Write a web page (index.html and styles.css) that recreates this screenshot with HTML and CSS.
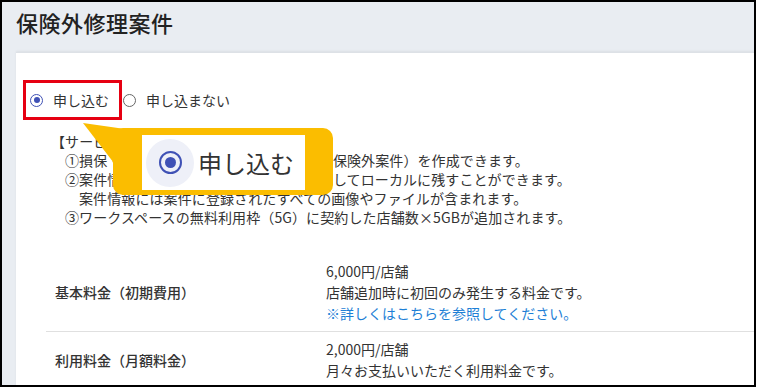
FILE: index.html
```html
<!DOCTYPE html>
<html lang="ja">
<head>
    <meta charset="UTF-8">
    <meta name="viewport" content="width=device-width, initial-scale=1.0">
    <title>保険外修理案件</title>
    <link rel="stylesheet" href="styles.css">
</head>
<body>
    <div class="frame">
        <h1 class="page-title">保険外修理案件</h1>

        <div class="card">
            <div class="radio-group">
                <label class="radio-item">
                    <span class="radio checked"></span>
                    <span>申し込む</span>
                </label>
                <label class="radio-item">
                    <span class="radio"></span>
                    <span>申し込まない</span>
                </label>
            </div>

            <div class="service">
                <p>【サービス内容】</p>
                <p class="item">①損保・共済会社を経由しない修理案件（保険外案件）を作成できます。</p>
                <p class="item">②案件情報を一括でまとめてダウンロードしてローカルに残すことができます。</p>
                <p class="item sub">案件情報には案件に登録されたすべての画像やファイルが含まれます。</p>
                <p class="item">③ワークスペースの無料利用枠（5G）に契約した店舗数×5GBが追加されます。</p>
            </div>

            <table class="fees">
                <tr>
                    <th>基本料金（初期費用）</th>
                    <td>
                        6,000円/店舗<br>
                        店舗追加時に初回のみ発生する料金です。<br>
                        <a href="#" class="link">※詳しくはこちらを参照してください。</a>
                    </td>
                </tr>
                <tr>
                    <th>利用料金（月額料金）</th>
                    <td>
                        2,000円/店舗<br>
                        月々お支払いいただく利用料金です。
                    </td>
                </tr>
            </table>
        </div>

        <!-- annotation overlay -->
        <div class="mark"></div>
        <svg class="tail" width="50" height="50" viewBox="0 0 50 50">
            <polygon points="2,2 44,8 36,46" fill="#fbbd00"/>
        </svg>
        <div class="callout">
            <div class="callout-inner">
                <span class="halo"><span class="radio big checked"></span></span>
                <span class="callout-text">申し込む</span>
            </div>
        </div>
    </div>
</body>
</html>
```

FILE: styles.css
```css
body {
    margin: 0;
    font-family: "Noto Sans CJK JP", "Noto Sans", sans-serif;
    color: #333;
    background: #fff;
}
.frame {
    position: relative;
    width: 756px;
    height: 387px;
    box-sizing: border-box;
    border: 2px solid #000;
    background: #e9edf2;
    overflow: hidden;
}
.page-title {
    margin: 0;
    padding: 5px 14px 0;
    height: 45px;
    font-size: 22px;
    line-height: 30px;
    font-weight: 500;
    letter-spacing: 0.5px;
    color: #222;
}
.card {
    margin-left: 14px;
    padding: 37px 0 0 14px;
    height: 400px;
    background: #fff;
    border-top: 1px solid #dde1e6;
    box-shadow: 0 -1px 2px rgba(0, 0, 0, 0.06);
}
.radio-group {
    display: flex;
    align-items: center;
    gap: 14px;
    font-size: 14px;
    line-height: 20px;
}
.radio-item {
    display: flex;
    align-items: center;
    gap: 10px;
}
.radio {
    width: 13px;
    height: 13px;
    box-sizing: border-box;
    border: 1.5px solid #666;
    border-radius: 50%;
    display: flex;
    align-items: center;
    justify-content: center;
}
.radio.checked {
    border-color: #3f51b5;
}
.radio.checked::after {
    content: "";
    width: 6px;
    height: 6px;
    border-radius: 50%;
    background: #3f51b5;
}
.service {
    margin: 22px 0 0 21px;
    font-size: 14px;
    line-height: 19px;
    letter-spacing: 0.1px;
}
.service p {
    margin: 0;
}
.service .item {
    padding-left: 14px;
}
.service .sub {
    padding-left: 28px;
}
.fees {
    margin: 27px 0 0 16px;
    width: 720px;
    border-collapse: collapse;
    font-size: 14px;
    line-height: 21px;
}
.fees tr {
    border-bottom: 1px solid #e0e0e0;
}
.fees th {
    width: 271px;
    padding: 7px 0 7px 9px;
    text-align: left;
    font-weight: 500;
}
.fees td {
    padding: 7px 0;
}
.link {
    color: #1e7fd6;
    text-decoration: none;
}
.mark {
    position: absolute;
    left: 21px;
    top: 78px;
    width: 99px;
    height: 40px;
    box-sizing: border-box;
    border: 3px solid #e60012;
}
.tail {
    position: absolute;
    left: 79px;
    top: 119px;
}
.callout {
    position: absolute;
    left: 111px;
    top: 126px;
    width: 220px;
    height: 67px;
    box-sizing: border-box;
    padding: 7px 28px 5px 29px;
    background: #fbbd00;
    border-radius: 10px;
}
.callout-inner {
    height: 55px;
    background: #fff;
    display: flex;
    align-items: center;
    padding-left: 4px;
    gap: 4px;
}
.halo {
    width: 48px;
    height: 48px;
    border-radius: 50%;
    background: #eef0f8;
    display: flex;
    align-items: center;
    justify-content: center;
}
.radio.big {
    width: 23px;
    height: 23px;
    border-width: 2.5px;
}
.radio.big::after {
    width: 11px;
    height: 11px;
}
.callout-text {
    font-size: 24px;
    line-height: 30px;
    color: #333;
}
```
